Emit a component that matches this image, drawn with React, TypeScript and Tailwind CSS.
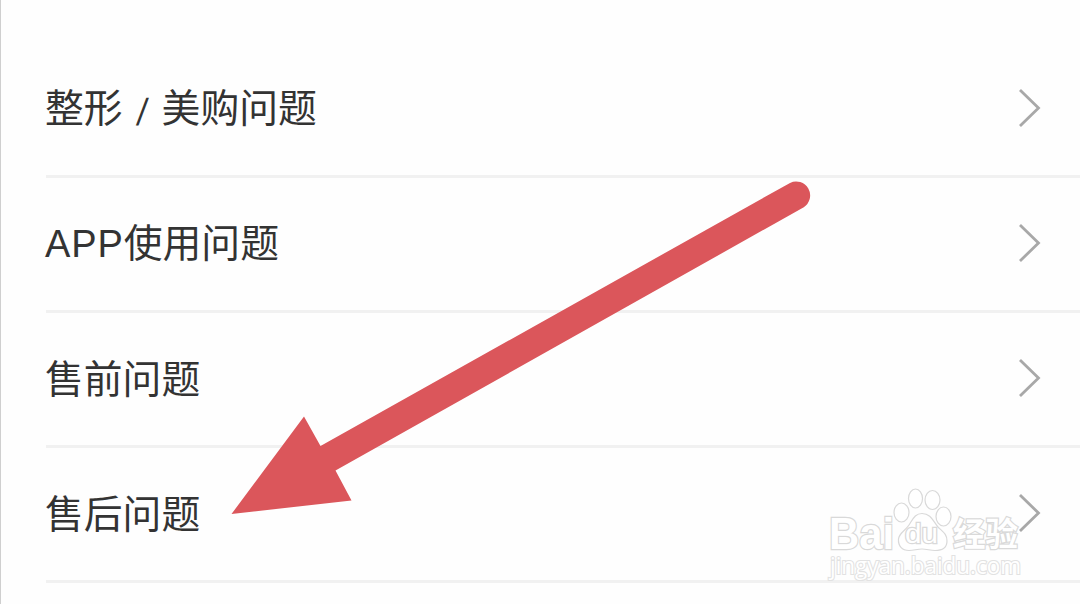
import type { ReactNode } from 'react'

const rows: { id: string; label: ReactNode }[] = [
  {
    id: 'beauty',
    label: (
      <>
        整形<span className="inline-block w-[39px] -skew-x-6 text-center font-['Inter',sans-serif] text-[32px] leading-none">/</span>美购问题
      </>
    ),
  },
  {
    id: 'app',
    label: (
      <>
        <span className="font-['Liberation_Sans',sans-serif] text-[38px] leading-none tracking-[0.9px]">APP</span>使用问题
      </>
    ),
  },
  { id: 'presale', label: '售前问题' },
  { id: 'aftersale', label: '售后问题' },
]

function Chevron() {
  return (
    <svg width="24" height="40" viewBox="0 0 24 40" fill="none" className="mb-[3px] shrink-0">
      <path d="M2 2 L20.5 20 L2 38" stroke="#a8a8a8" strokeWidth="2.8" />
    </svg>
  )
}

function Arrow() {
  return (
    <svg width="1080" height="604" viewBox="0 0 1080 604" className="pointer-events-none absolute left-0 top-0">
      <path
        d="M231.5 514 L304 416.5 L320.5 446 L790 182.9 A14 14 0 0 1 803.8 207.2 L335.5 470.5 L351.5 500.5 Z"
        fill="#db565b"
      />
    </svg>
  )
}

function Watermark() {
  return (
    <svg
      width="220"
      height="110"
      viewBox="820 480 220 110"
      className="pointer-events-none absolute left-[820px] top-[480px]"
      fill="#fff"
      stroke="#d9d9d9"
      strokeWidth="1.2"
    >
      <text
        x="829"
        y="549"
        fontSize="44"
        textLength="65"
        lengthAdjust="spacingAndGlyphs"
        strokeWidth="2.4"
        paintOrder="stroke"
        className="font-['Liberation_Sans',sans-serif] font-bold"
      >
        Bai
      </text>
      <ellipse cx="901.5" cy="512.5" rx="7.5" ry="9.5" />
      <ellipse cx="915.5" cy="498.5" rx="7" ry="9.5" />
      <ellipse cx="932.5" cy="500" rx="7.5" ry="9.5" />
      <ellipse cx="943.5" cy="516.5" rx="7.5" ry="9.5" />
      <path d="M922 513.5 C931 513.5 933 521 938 527 C943 532 947 534 947 541 C947 548 942 550.5 935 550.5 C930 550.5 927 549 922 549 C917 549 914 550.5 909 550.5 C902 550.5 898 546 898.5 539 C899 533 905 531 909 525 C913 519 915 513.5 922 513.5 Z" />
      <text
        x="905"
        y="543"
        fontSize="27"
        textLength="33"
        lengthAdjust="spacingAndGlyphs"
        strokeWidth="2.4"
        paintOrder="stroke"
        className="font-['Liberation_Sans',sans-serif]"
      >
        du
      </text>
      <text
        x="953"
        y="546"
        fontSize="33"
        textLength="65"
        lengthAdjust="spacingAndGlyphs"
        strokeWidth="2.4"
        paintOrder="stroke"
        className="font-['Noto_Sans_CJK_SC',sans-serif] font-bold"
      >
        经验
      </text>
      <text
        x="830"
        y="574"
        fontSize="23"
        textLength="191"
        lengthAdjust="spacingAndGlyphs"
        strokeWidth="2.2"
        paintOrder="stroke"
        stroke="#e2e2e2"
        className="font-['Open_Sans',sans-serif]"
      >
        jingyan.baidu.com
      </text>
    </svg>
  )
}

export default function App() {
  return (
    <main className="relative h-[604px] w-[1080px] overflow-hidden border-l border-[#cfcfcf] bg-[#fefefe] font-['Noto_Sans_CJK_SC',sans-serif] text-[#333]">
      <ul className="pl-[45px] pt-[43px]">
        {rows.map((row) => (
          <li
            key={row.id}
            className="flex h-[135px] items-center justify-between border-b-[3px] border-[#f1f1f1] pr-[38px]"
          >
            <span className="-ml-px whitespace-nowrap pb-[5px] text-[38.8px] leading-none">{row.label}</span>
            <Chevron />
          </li>
        ))}
      </ul>
      <div className="absolute -left-px top-0">
        <Arrow />
        <Watermark />
      </div>
    </main>
  )
}
